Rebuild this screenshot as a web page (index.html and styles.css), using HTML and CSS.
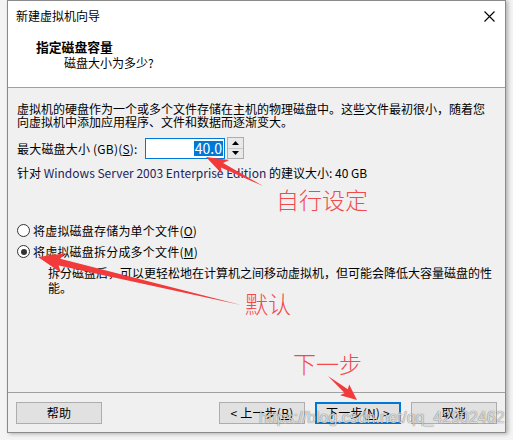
FILE: index.html
```html
<!DOCTYPE html>
<html lang="zh-CN">
<head>
<meta charset="utf-8">
<title>新建虚拟机向导</title>
<link rel="stylesheet" href="styles.css">
</head>
<body>
<div class="window">
  <div class="header">
    <div class="titlebar">
      <span class="title">新建虚拟机向导</span>
      <span class="close"><svg width="11" height="11" viewBox="0 0 11 11"><path d="M0.5 0.5 L10.5 10.5 M10.5 0.5 L0.5 10.5" stroke="#000" stroke-width="1.1" fill="none"/></svg></span>
    </div>
    <div class="heading">指定磁盘容量</div>
    <div class="subheading">磁盘大小为多少?</div>
  </div>
  <div class="content">
    <p class="intro">虚拟机的硬盘作为一个或多个文件存储在主机的物理磁盘中。这些文件最初很小，随着您<br>向虚拟机中添加应用程序、文件和数据而逐渐变大。</p>
    <div class="size-row">
      <span class="label">最大磁盘大小 (GB)(<u>S</u>):</span>
      <div class="field"><span class="sel">40.0</span></div>
      <div class="spin">
        <span class="spin-btn"><svg width="7" height="4" viewBox="0 0 7 4"><path d="M3.5 0 L7 4 L0 4 Z" fill="#000"/></svg></span>
        <span class="spin-btn"><svg width="7" height="4" viewBox="0 0 7 4"><path d="M0 0 L7 0 L3.5 4 Z" fill="#000"/></svg></span>
      </div>
    </div>
    <p class="hint">针对 <span class="os">Windows Server 2003 Enterprise Edition</span> 的建议大小: 40 GB</p>
    <div class="radios">
      <div class="radio"><span class="circle"></span><span>将虚拟磁盘存储为单个文件(<u>O</u>)</span></div>
      <div class="radio"><span class="circle checked"></span><span>将虚拟磁盘拆分成多个文件(<u>M</u>)</span></div>
      <p class="desc">拆分磁盘后，可以更轻松地在计算机之间移动虚拟机，但可能会降低大容量磁盘的性<br>能。</p>
    </div>
  </div>
  <div class="footer">
    <button class="btn">帮助</button>
    <div class="spacer"></div>
    <button class="btn">&lt; 上一步(<u>B</u>)</button>
    <button class="btn default">下一步(<u>N</u>) &gt;</button>
    <button class="btn">取消</button>
  </div>
</div>

<svg class="arrows" width="513" height="440" viewBox="0 0 513 440">
  <polygon points="263,186 223.1,163.0 229.2,159.9 206,157 222.0,174.1 220.9,167.4" fill="#f23a3a"/>
  <polygon points="241,305 60.2,258.7 65.6,253.3 38,257 61.0,272.7 58.6,265.5" fill="#f23a3a"/>
  <polygon points="328,376 344.6,393.0 340.2,395.2 357,400 349.2,384.4 347.8,389.2" fill="#f23a3a"/>
</svg>
<span class="note note-set">自行设定</span>
<span class="note note-default">默认</span>
<span class="note note-next">下一步</span>
<span class="watermark">https://blog.csdn.net/qq_42902462</span>
</body>
</html>
```

FILE: styles.css
```css
html, body {
  margin: 0;
  padding: 0;
}
body {
  position: relative;
  width: 513px;
  height: 440px;
  overflow: hidden;
  background: #f4f4f4;
  font-family: "Noto Sans CJK SC", sans-serif;
  font-size: 12px;
  color: #000;
}
.window {
  margin-left: 7px;
  width: 497px;
  height: 431px;
  border: 1px solid #8a8a8a;
  background: #f0f0f0;
  display: flex;
  flex-direction: column;
  box-shadow: 2px 1px 4px rgba(0, 0, 0, 0.28);
}
.header {
  height: 86px;
  background: #fff;
  border-bottom: 1px solid #a0a0a0;
  flex: none;
}
.titlebar {
  height: 30px;
  display: flex;
  align-items: center;
  padding-left: 8px;
  padding-right: 10px;
}
.title {
  flex: 1;
  font-size: 12px;
  line-height: 16px;
}
.close {
  display: flex;
  width: 11px;
  height: 11px;
}
.heading {
  margin-top: 8px;
  padding-left: 28px;
  font-weight: bold;
  font-size: 12.8px;
  line-height: 16px;
}
.subheading {
  padding-left: 56px;
  font-size: 12px;
  line-height: 16px;
}
.content {
  height: 304px;
  flex: none;
  padding: 14px 0 0 9px;
  box-sizing: border-box;
  font-size: 12px;
}
.intro {
  margin: 0;
  line-height: 13px;
  white-space: nowrap;
}
.size-row {
  margin-top: 9px;
  height: 22px;
  display: flex;
  align-items: center;
}
.label {
  width: 128px;
  flex: none;
  letter-spacing: 0.2px;
}
.field {
  width: 77px;
  height: 19px;
  border: 1px solid #0078d7;
  background: #fff;
  display: flex;
  justify-content: flex-end;
  align-items: center;
  padding-right: 1px;
}
.sel {
  background: #0078d7;
  color: #fff;
  font-size: 14px;
  line-height: 15px;
  padding: 0 1px;
}
.spin {
  margin-left: 2px;
  width: 15px;
  height: 20px;
  border: 1px solid #adadad;
  background: #e9e9e9;
  display: flex;
  flex-direction: column;
}
.spin-btn {
  flex: 1;
  display: flex;
  align-items: center;
  justify-content: center;
}
.spin-btn + .spin-btn {
  border-top: 1px solid #c8c8c8;
}
.hint {
  margin: 7px 0 0 0;
  line-height: 14px;
  white-space: nowrap;
}
.os {
  color: #1c2461;
}
.radios {
  margin-top: 40px;
}
.radio {
  height: 21px;
  display: flex;
  align-items: center;
  gap: 3px;
  white-space: nowrap;
  letter-spacing: 0.2px;
}
.circle {
  width: 11px;
  height: 11px;
  border: 1px solid #333;
  border-radius: 50%;
  background: #fff;
  position: relative;
  flex: none;
}
.circle.checked::after {
  content: "";
  position: absolute;
  left: 2.5px;
  top: 2.5px;
  width: 6px;
  height: 6px;
  border-radius: 50%;
  background: #333;
}
.desc {
  margin: 3px 0 0 31px;
  line-height: 15px;
  white-space: nowrap;
}
.footer {
  flex: 1;
  border-top: 1px solid #a0a0a0;
  display: flex;
  align-items: flex-start;
  padding: 9px 8px 0 8px;
  gap: 10px;
}
.spacer {
  flex: 1;
}
.btn {
  width: 86px;
  height: 22px;
  border: 1px solid #adadad;
  background: #e1e1e1;
  font-family: "Noto Sans CJK SC", sans-serif;
  font-size: 12px;
  letter-spacing: 0.2px;
  color: #000;
  padding: 0;
  line-height: 18px;
}
.btn.default {
  border: 2px solid #0078d7;
}
.arrows {
  position: absolute;
  left: 0;
  top: 0;
  pointer-events: none;
}
.note {
  position: absolute;
  font-weight: 300;
  font-size: 23px;
  line-height: 23px;
  color: #f24a4a;
  white-space: nowrap;
}
.note-set {
  left: 276px;
  top: 188px;
}
.note-default {
  left: 245px;
  top: 292px;
}
.note-next {
  left: 293px;
  top: 352px;
}
.watermark {
  position: absolute;
  left: 259px;
  top: 408px;
  font-family: "Liberation Sans", sans-serif;
  font-size: 16px;
  line-height: 20px;
  color: rgba(255, 255, 255, 0.75);
  text-shadow: 0 0 1px rgba(0, 0, 0, 0.45), 0 0 1px rgba(0, 0, 0, 0.3);
  white-space: nowrap;
}
```
